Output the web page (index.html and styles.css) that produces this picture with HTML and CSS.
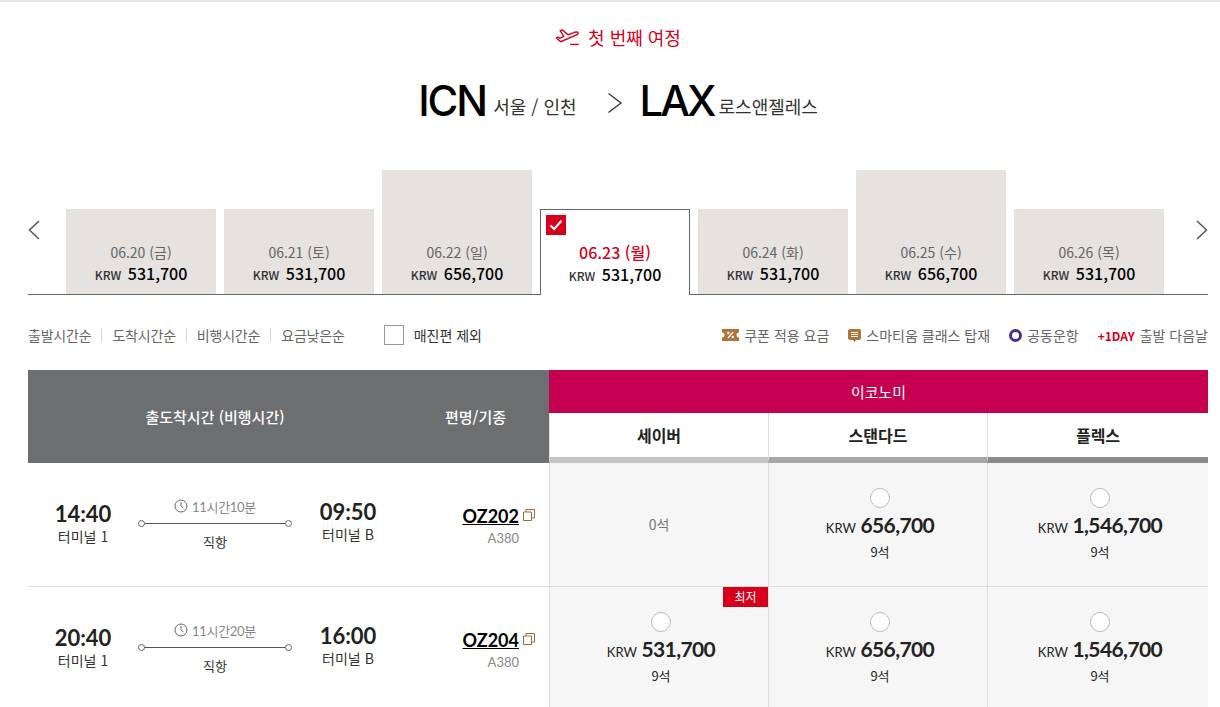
FILE: index.html
```html
<!DOCTYPE html>
<html lang="ko">
<head>
    <meta charset="UTF-8">
    <title>항공권 선택</title>
    <link rel="stylesheet" href="styles.css">
</head>
<body>
    <div class="page">
        <h2 class="trip-title">
            <svg class="trip-icon" width="25" height="17" viewBox="0 0 23 16"><path d="M1 8.500L5 12l14-6c2.500-1 3-2.500 2-3s-3 0-5 1l-4 1.500L6.500.8l-2 .7L8 7 4 8.800 2.500 7.500z" fill="none" stroke="#d6001c" stroke-width="1.300" stroke-linejoin="round"/><path d="M14 14.500h8" stroke="#d6001c" stroke-width="1.300"/></svg>
            <span>첫 번째 여정</span>
        </h2>

        <div class="route">
            <div class="city"><b>ICN</b><span>서울 / 인천</span></div>
            <svg class="route-arrow" width="16" height="22" viewBox="0 0 16 22"><path d="M1.500 1.500L14 11 1.500 20.500" fill="none" stroke="#333" stroke-width="1.300"/></svg>
            <div class="city"><b>LAX</b><span>로스앤젤레스</span></div>
        </div>

        <!-- Date strip -->
        <div class="dates">
            <svg class="date-arrow" width="12" height="20" viewBox="0 0 12 20"><path d="M11 1L1.500 10 11 19" fill="none" stroke="#555" stroke-width="1.500"/></svg>
            <div class="date-list">
                <div class="date-card"><p class="date-day">06.20 (금)</p><p class="date-price"><small>KRW</small> 531,700</p></div>
                <div class="date-card"><p class="date-day">06.21 (토)</p><p class="date-price"><small>KRW</small> 531,700</p></div>
                <div class="date-card tall"><p class="date-day">06.22 (일)</p><p class="date-price"><small>KRW</small> 656,700</p></div>
                <div class="date-card active">
                    <span class="date-check"><svg width="14" height="12" viewBox="0 0 14 12"><path d="M1.500 6.500L5.200 10 12.500 1.800" fill="none" stroke="#fff" stroke-width="2.200"/></svg></span>
                    <p class="date-day">06.23 (월)</p><p class="date-price"><small>KRW</small> 531,700</p>
                </div>
                <div class="date-card"><p class="date-day">06.24 (화)</p><p class="date-price"><small>KRW</small> 531,700</p></div>
                <div class="date-card tall"><p class="date-day">06.25 (수)</p><p class="date-price"><small>KRW</small> 656,700</p></div>
                <div class="date-card"><p class="date-day">06.26 (목)</p><p class="date-price"><small>KRW</small> 531,700</p></div>
            </div>
            <svg class="date-arrow" width="12" height="20" viewBox="0 0 12 20"><path d="M1 1l9.500 9L1 19" fill="none" stroke="#555" stroke-width="1.500"/></svg>
        </div>

        <!-- Sort and legend -->
        <div class="filters">
            <ul class="sort">
                <li>출발시간순</li>
                <li>도착시간순</li>
                <li>비행시간순</li>
                <li>요금낮은순</li>
            </ul>
            <label class="sold-out"><span class="checkbox"></span>매진편 제외</label>
            <ul class="legend">
                <li>
                    <svg width="17" height="12" viewBox="0 0 17 12"><path d="M0 0h17v3.500a2.500 2.500 0 0 0 0 5V12H0V8.500a2.500 2.500 0 0 0 0-5z" fill="#b0743a"/><path d="M6 9l5-6" stroke="#fff" stroke-width="1.200"/><circle cx="6.300" cy="4" r="1.200" fill="#fff"/><circle cx="10.700" cy="8" r="1.200" fill="#fff"/></svg>
                    쿠폰 적용 요금
                </li>
                <li>
                    <svg width="13" height="13" viewBox="0 0 13 13"><path d="M2 0h9a2 2 0 0 1 2 2v7a2 2 0 0 1-2 2H8l-1.500 2L5 11H2a2 2 0 0 1-2-2V2a2 2 0 0 1 2-2z" fill="#b0743a"/><path d="M3 3.500h7M3 5.500h7M3 7.500h7" stroke="#fff" stroke-width="1"/></svg>
                    스마티움 클래스 탑재
                </li>
                <li><span class="codeshare"></span>공동운항</li>
                <li><b class="plus-day">+1DAY</b>출발 다음날</li>
            </ul>
        </div>

        <!-- Flight table -->
        <div class="table">
            <div class="head-left">
                <div class="head-time">출도착시간 (비행시간)</div>
                <div class="head-flight">편명/기종</div>
            </div>
            <div class="head-right">
                <div class="cabin">이코노미</div>
                <div class="fares">
                    <div class="fare saver">세이버</div>
                    <div class="fare standard">스탠다드</div>
                    <div class="fare flex">플렉스</div>
                </div>
            </div>

            <div class="row">
                <div class="info">
                    <div class="stop"><b>14:40</b><span>터미널 1</span></div>
                    <div class="path">
                        <div class="duration">
                            <svg width="14" height="14" viewBox="0 0 14 14"><circle cx="7" cy="7" r="6" fill="none" stroke="#666" stroke-width="1"/><path d="M7 3.200V7l2.500 2" fill="none" stroke="#666" stroke-width="1"/></svg>
                            11시간10분
                        </div>
                        <div class="line"></div>
                        <div class="direct">직항</div>
                    </div>
                    <div class="stop arrive"><b>09:50</b><span>터미널 B</span></div>
                    <div class="flight">
                        <div class="flight-no"><a>OZ202</a>
                            <svg width="12" height="12" viewBox="0 0 12 12"><path d="M.5 3h8v8.500h-8zM3 3V.5h8.500V9H8.500" fill="none" stroke="#9a6a3c"/></svg>
                        </div>
                        <span>A380</span>
                    </div>
                </div>
                <div class="cell empty">0석</div>
                <div class="cell">
                    <span class="radio"></span>
                    <p class="price"><small>KRW</small> 656,700</p>
                    <p class="seats">9석</p>
                </div>
                <div class="cell">
                    <span class="radio"></span>
                    <p class="price"><small>KRW</small> 1,546,700</p>
                    <p class="seats">9석</p>
                </div>
            </div>

            <div class="row">
                <div class="info">
                    <div class="stop"><b>20:40</b><span>터미널 1</span></div>
                    <div class="path">
                        <div class="duration">
                            <svg width="14" height="14" viewBox="0 0 14 14"><circle cx="7" cy="7" r="6" fill="none" stroke="#666" stroke-width="1"/><path d="M7 3.200V7l2.500 2" fill="none" stroke="#666" stroke-width="1"/></svg>
                            11시간20분
                        </div>
                        <div class="line"></div>
                        <div class="direct">직항</div>
                    </div>
                    <div class="stop arrive"><b>16:00</b><span>터미널 B</span></div>
                    <div class="flight">
                        <div class="flight-no"><a>OZ204</a>
                            <svg width="12" height="12" viewBox="0 0 12 12"><path d="M.5 3h8v8.500h-8zM3 3V.5h8.500V9H8.500" fill="none" stroke="#9a6a3c"/></svg>
                        </div>
                        <span>A380</span>
                    </div>
                </div>
                <div class="cell">
                    <em class="lowest">최저</em>
                    <span class="radio"></span>
                    <p class="price"><small>KRW</small> 531,700</p>
                    <p class="seats">9석</p>
                </div>
                <div class="cell">
                    <span class="radio"></span>
                    <p class="price"><small>KRW</small> 656,700</p>
                    <p class="seats">9석</p>
                </div>
                <div class="cell">
                    <span class="radio"></span>
                    <p class="price"><small>KRW</small> 1,546,700</p>
                    <p class="seats">9석</p>
                </div>
            </div>
        </div>
    </div>
</body>
</html>
```

FILE: styles.css
```css
/* General Styles */
html, body {
    height: 707px;
    overflow: hidden;
}

body {
    margin: 0;
    background: #fff;
    color: #222;
    font-family: 'Noto Sans CJK KR', 'Noto Sans', sans-serif;
    font-size: 14px;
}

p, ul, h2 {
    margin: 0;
    padding: 0;
}

ul {
    list-style: none;
}

.page {
    height: 707px;
    box-sizing: border-box;
    padding: 0 12px 0 28px;
    border-top: 2px solid #e6e6e6;
    overflow: hidden;
}

/* Title */
.trip-title {
    display: flex;
    justify-content: center;
    align-items: center;
    gap: 8px;
    height: 24px;
    margin-top: 23px;
    color: #d6001c;
    font-size: 18px;
    font-weight: 400;
}

.route {
    display: flex;
    justify-content: center;
    align-items: center;
    height: 44px;
    margin-top: 30px;
}

.route-arrow {
    margin: 4px 17px 0 30px;
}

.city {
    display: flex;
    align-items: flex-end;
    gap: 7px;
}

.city:last-child {
    gap: 5px;
}

.city b {
    color: #000;
    font-family: 'Inter', sans-serif;
    font-size: 42px;
    font-weight: 500;
    letter-spacing: -2px;
    line-height: 44px;
}

.city:last-child b {
    letter-spacing: -3px;
}

.city span {
    margin-bottom: 4px;
    font-size: 18px;
    line-height: 26px;
    color: #333;
}

/* Date strip */
.dates {
    display: flex;
    align-items: flex-start;
    height: 124px;
    margin-top: 47px;
    border-bottom: 1px solid #666;
}

.date-arrow {
    margin-top: 50px;
}

.date-list {
    display: flex;
    align-items: flex-end;
    gap: 8px;
    height: 124px;
    margin: 0 auto 0 26px;
}

.date-card {
    position: relative;
    width: 150px;
    height: 85px;
    box-sizing: border-box;
    padding-top: 33px;
    background: #e5e2df;
    text-align: center;
}

.date-card.tall {
    height: 124px;
    padding-top: 72px;
}

.date-card.active {
    height: 86px;
    margin-bottom: -1px;
    padding-top: 32px;
    background: #fff;
    border: 1px solid #666;
    border-bottom: 0;
}

.date-day {
    color: #666;
    font-size: 14px;
    line-height: 20px;
}

.active .date-day {
    color: #d6001c;
    font-weight: 500;
    font-size: 16px;
    line-height: 21px;
}

.date-price {
    margin-top: 1px;
    color: #000;
    font-size: 16px;
    font-weight: 500;
    line-height: 21px;
}

.date-price small {
    margin-right: 2px;
    color: #333;
    font-size: 12px;
}

.date-check {
    position: absolute;
    top: 5px;
    left: 5px;
    display: flex;
    justify-content: center;
    align-items: center;
    width: 20px;
    height: 20px;
    background: #d6001c;
}

/* Sort and legend */
.filters {
    display: flex;
    align-items: center;
    height: 40px;
    margin-top: 20px;
    color: #666;
    font-size: 14px;
}

.sort {
    display: flex;
    letter-spacing: -0.2px;
}

.sort li {
    padding: 0 10px;
    line-height: 14px;
    border-left: 1px solid #d5d5d5;
}

.sort li:first-child {
    padding-left: 0;
    border-left: 0;
}

.sold-out {
    display: flex;
    align-items: center;
    gap: 10px;
    margin-left: 29px;
    color: #333;
}

.checkbox {
    width: 18px;
    height: 18px;
    border: 1px solid #999;
}

.legend {
    display: flex;
    gap: 19px;
    margin-left: auto;
}

.legend li {
    display: flex;
    align-items: center;
    gap: 5px;
}

.codeshare {
    width: 7px;
    height: 7px;
    border: 3px solid #46328f;
    border-radius: 50%;
}

.plus-day {
    color: #d6001c;
    font-size: 12px;
    font-weight: 700;
}

/* Flight table */
.table {
    display: grid;
    grid-template-columns: 521px 659px;
    margin-top: 15px;
}

.head-left {
    display: flex;
    align-items: center;
    height: 93px;
    background: #6d6e70;
    color: #fff;
    font-size: 15px;
    font-weight: 500;
}

.head-time {
    width: 374px;
    text-align: center;
}

.head-flight {
    width: 147px;
    padding-left: 43px;
    box-sizing: border-box;
}

.cabin {
    height: 43px;
    background: #c50051;
    color: #fff;
    font-size: 15px;
    line-height: 43px;
    text-align: center;
}

.fares {
    display: grid;
    grid-template-columns: 219px 219px 221px;
}

.fare {
    height: 44px;
    border-left: 1px solid #ddd;
    border-bottom: 6px solid #c3c3c3;
    font-size: 16px;
    font-weight: 700;
    line-height: 44px;
    text-align: center;
}

.fare.standard {
    border-bottom-color: #a6a6a6;
}

.fare.flex {
    border-bottom-color: #8a8a8a;
}

.row {
    display: grid;
    grid-column: 1 / 3;
    grid-template-columns: 521px 219px 219px 221px;
    height: 124px;
    border-bottom: 1px solid #ddd;
    box-sizing: border-box;
}

.info {
    display: flex;
    align-items: flex-start;
    padding-top: 25px;
}

.stop {
    display: flex;
    flex-direction: column;
    align-items: center;
    width: 110px;
    margin-top: 11px;
}

.stop b {
    font-family: 'Lato', sans-serif;
    font-size: 22px;
    font-weight: 700;
    line-height: 30px;
}

.stop span {
    margin-top: -1px;
    color: #333;
    font-size: 14px;
    line-height: 16px;
}

.stop.arrive {
    width: 98px;
    margin-top: 9px;
}

.path {
    width: 154px;
    margin-top: 9px;
    margin-right: 7px;
    color: #888;
    text-align: center;
}

.duration {
    display: flex;
    justify-content: center;
    align-items: center;
    gap: 4px;
    height: 18px;
    font-family: 'Lato', 'Noto Sans CJK KR', sans-serif;
    font-size: 13px;
    letter-spacing: -0.3px;
}

.line {
    position: relative;
    height: 1px;
    margin: 8px 3px 0;
    background: #555;
}

.line::before,
.line::after {
    content: "";
    position: absolute;
    top: -3px;
    width: 5px;
    height: 5px;
    background: #fff;
    border: 1px solid #666;
    border-radius: 50%;
}

.line::before {
    left: -3px;
}

.line::after {
    right: -3px;
}

.direct {
    margin-top: 9px;
    color: #333;
    font-size: 13px;
    line-height: 18px;
}

.flight {
    flex: 1;
    margin-top: 16px;
    padding-right: 30px;
    text-align: right;
    color: #888;
    font-family: 'Lato', sans-serif;
    font-size: 13px;
}

.flight-no {
    display: flex;
    justify-content: flex-end;
    align-items: flex-start;
    gap: 4px;
    margin-right: -16px;
}

.flight-no svg {
    margin-top: 5px;
}

.flight-no a {
    color: #000;
    font-size: 18px;
    font-weight: 700;
    line-height: 24px;
    text-decoration: underline;
}

.flight span {
    display: block;
    margin-top: 2px;
}

.cell {
    position: relative;
    display: flex;
    flex-direction: column;
    align-items: center;
    padding: 25px 0 0 4px;
    background: #f6f6f6;
    border-left: 1px solid #ddd;
}

.cell.empty {
    justify-content: center;
    padding: 0 0 2px;
    color: #777;
}

.radio {
    width: 18px;
    height: 18px;
    background: #fff;
    border: 1px solid #bbb;
    border-radius: 50%;
}

.price {
    margin-top: 3px;
    font-family: 'Lato', sans-serif;
    font-size: 21px;
    font-weight: 700;
    line-height: 28px;
    letter-spacing: -0.6px;
}

.price small {
    font-size: 13px;
    font-weight: 400;
    letter-spacing: 0;
}

.seats {
    margin-top: 1px;
    font-size: 13px;
    line-height: 18px;
}

.lowest {
    position: absolute;
    top: 0;
    right: 0;
    width: 45px;
    height: 20px;
    background: #d6001c;
    color: #fff;
    font-size: 12px;
    font-style: normal;
    line-height: 20px;
    text-align: center;
}
```
